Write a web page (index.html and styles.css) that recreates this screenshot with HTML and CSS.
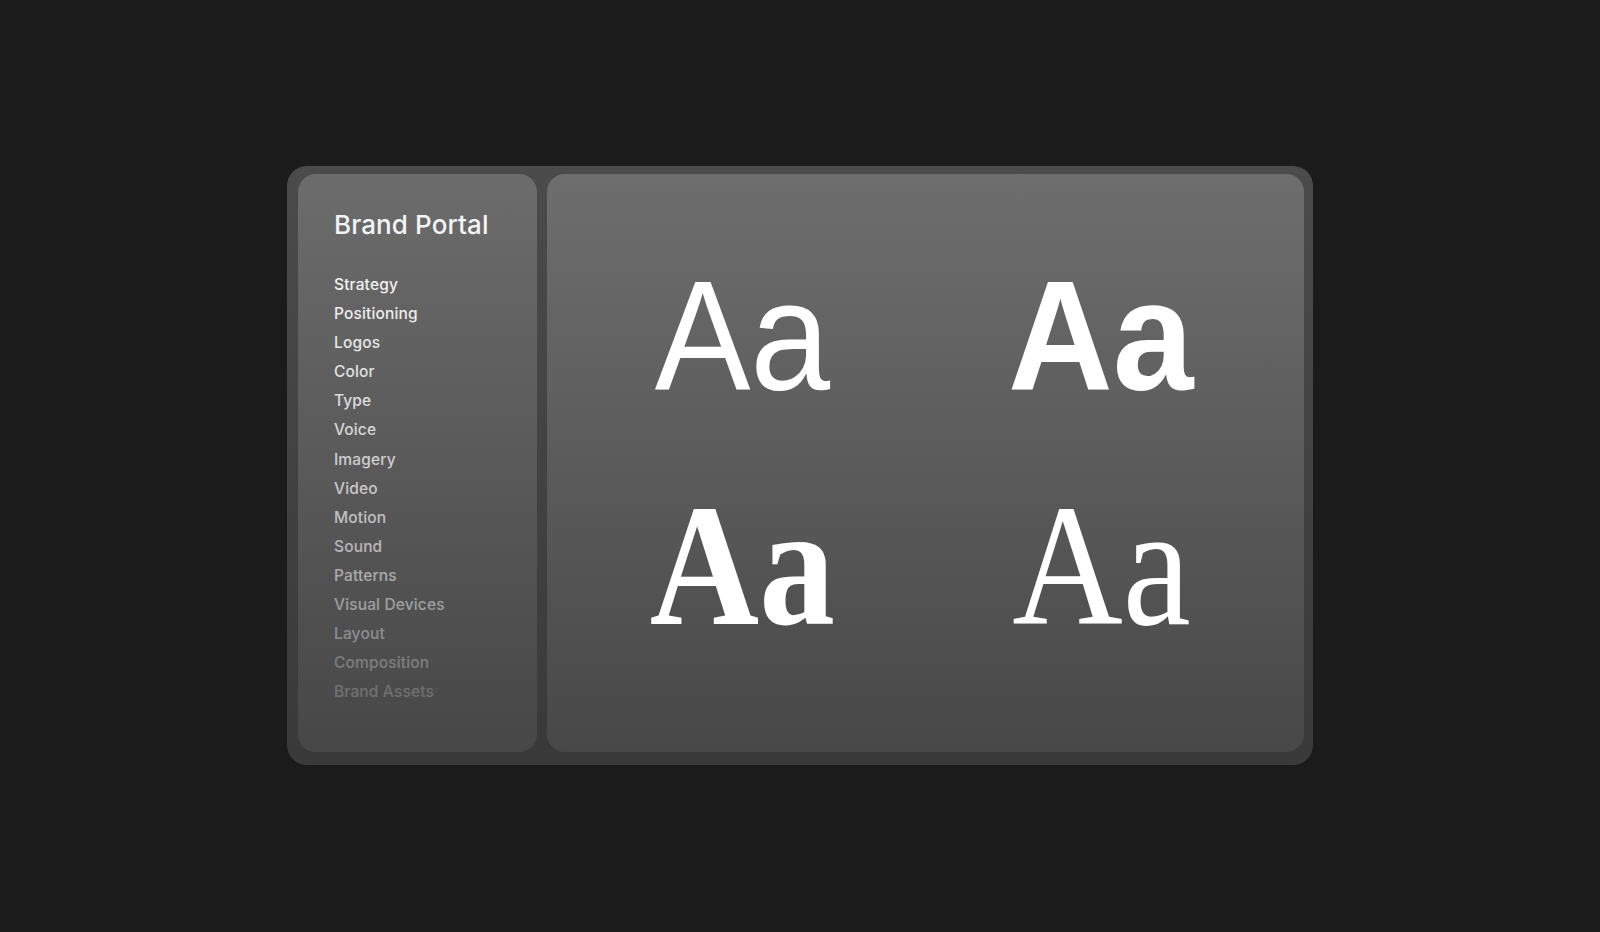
FILE: index.html
```html
<!DOCTYPE html>
<html lang="en">
<head>
  <meta charset="UTF-8" />
  <title>Brand Portal</title>
  <link rel="stylesheet" href="styles.css">
</head>
<body>
  <div class="frame">
    <aside class="sidebar">
      <h1 class="title">Brand Portal</h1>
      <nav class="nav">
        <a class="nav-item" style="opacity: 1">Strategy</a>
        <a class="nav-item" style="opacity: 0.97">Positioning</a>
        <a class="nav-item" style="opacity: 0.93">Logos</a>
        <a class="nav-item" style="opacity: 0.89">Color</a>
        <a class="nav-item" style="opacity: 0.85">Type</a>
        <a class="nav-item" style="opacity: 0.81">Voice</a>
        <a class="nav-item" style="opacity: 0.77">Imagery</a>
        <a class="nav-item" style="opacity: 0.73">Video</a>
        <a class="nav-item" style="opacity: 0.68">Motion</a>
        <a class="nav-item" style="opacity: 0.62">Sound</a>
        <a class="nav-item" style="opacity: 0.55">Patterns</a>
        <a class="nav-item" style="opacity: 0.48">Visual Devices</a>
        <a class="nav-item" style="opacity: 0.38">Layout</a>
        <a class="nav-item" style="opacity: 0.29">Composition</a>
        <a class="nav-item" style="opacity: 0.22">Brand Assets</a>
      </nav>
    </aside>

    <main class="specimens">
      <div class="specimen"><span class="glyph sans-light">Aa</span></div>
      <div class="specimen"><span class="glyph sans-bold">Aa</span></div>
      <div class="specimen"><span class="glyph flare-bold">Aa</span></div>
      <div class="specimen"><span class="glyph flare-light">Aa</span></div>
    </main>
  </div>
</body>
</html>
```

FILE: styles.css
```css
html, body {
  margin: 0;
  height: 100%;
}

body {
  background: #1b1b1b;
  font-family: Inter, "Liberation Sans", sans-serif;
  color: #fff;
}

.frame {
  position: relative;
  top: 166px;
  margin-left: 287px;
  width: 1026px;
  height: 599px;
  box-sizing: border-box;
  padding: 8px 9px 13px 11px;
  display: flex;
  gap: 10px;
  border-radius: 20px;
  background: linear-gradient(180deg, #4b4b4b 0%, #393939 100%);
}

.sidebar {
  width: 239px;
  flex-shrink: 0;
  box-sizing: border-box;
  padding: 35px 0 0 36px;
  border-radius: 18px;
  background: linear-gradient(180deg, #6c6c6c 0%, #474747 100%);
}

.title {
  margin: 0 0 29px;
  font-size: 26px;
  font-weight: 500;
  letter-spacing: 0.1px;
  line-height: 32px;
  color: #f4f4f4;
}

.nav {
  display: flex;
  flex-direction: column;
}

.nav-item {
  font-size: 15.5px;
  font-weight: 500;
  letter-spacing: 0.15px;
  line-height: 29.1px;
  color: #f2f2f2;
}

.specimens {
  flex: 1;
  box-sizing: border-box;
  padding: 71px 103px 0 95px;
  display: grid;
  grid-template-columns: 200px 200px;
  grid-template-rows: 231px 227px;
  justify-content: space-between;
  align-content: start;
  border-radius: 18px;
  background: linear-gradient(180deg, #6e6e6e 0%, #484848 100%);
}

.specimen {
  display: flex;
  justify-content: center;
  align-items: flex-start;
}

.glyph {
  display: inline-block;
  font-size: 156px;
  line-height: 180px;
  white-space: nowrap;
  transform-origin: center center;
  color: #fff;
}

.sans-light {
  font-family: "Liberation Sans", sans-serif;
  transform: scaleX(0.92);
}

.sans-bold {
  font-family: "Liberation Sans", sans-serif;
  font-weight: 700;
  transform: scaleX(0.93);
}

.flare-bold {
  font-family: "Liberation Serif", serif;
  font-weight: 700;
  font-size: 174px;
  transform: scaleX(0.87);
}

.flare-light {
  font-family: "Liberation Serif", serif;
  font-size: 174px;
  transform: scaleX(0.88);
}
```
